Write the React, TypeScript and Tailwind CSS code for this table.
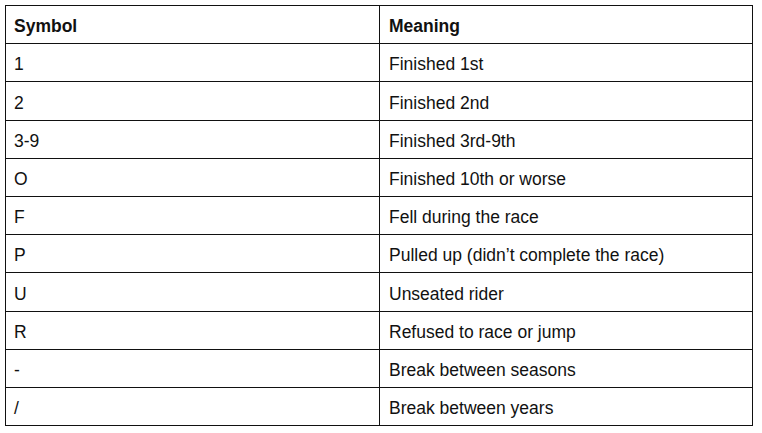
const rows: [string, string, string][] = [
  ['1', 'Finished 1st', 'h-[38px]'],
  ['2', 'Finished 2nd', 'h-[39px]'],
  ['3-9', 'Finished 3rd-9th', 'h-[38px]'],
  ['O', 'Finished 10th or worse', 'h-[38px]'],
  ['F', 'Fell during the race', 'h-[38px]'],
  ['P', 'Pulled up (didn’t complete the race)', 'h-[38px]'],
  ['U', 'Unseated rider', 'h-[39px]'],
  ['R', 'Refused to race or jump', 'h-[38px]'],
  ['-', 'Break between seasons', 'h-[38px]'],
  ['/', 'Break between years', 'h-[38px]'],
]

const App = () => {
  return (
    <div className="w-[762px] h-[433px] bg-white pt-[5px] pl-[5px] overflow-hidden font-['Liberation_Sans',Arial,sans-serif] text-[17.5px] text-[#111]">
      <table className="w-[747px] border-collapse table-fixed">
        <colgroup>
          <col className="w-[374px]" />
          <col className="w-[373px]" />
        </colgroup>
        <thead>
          <tr className="h-[38px]">
            <th className="border border-[#111] text-left font-bold pl-[8px] pt-[4px] pb-0 align-middle">Symbol</th>
            <th className="border border-[#111] text-left font-bold pl-[9px] pt-[4px] pb-0 align-middle">Meaning</th>
          </tr>
        </thead>
        <tbody>
          {rows.map(([sym, meaning, h]) => (
            <tr key={sym} className={h}>
              <td className="border border-[#111] pl-[8px] pt-[4px] pb-0 align-middle">{sym}</td>
              <td className="border border-[#111] pl-[9px] pt-[4px] pb-0 align-middle">{meaning}</td>
            </tr>
          ))}
        </tbody>
      </table>
    </div>
  )
}

export default App
